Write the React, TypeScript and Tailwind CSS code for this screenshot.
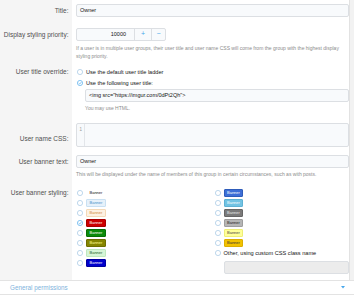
const Radio = ({ checked = false }: { checked?: boolean }) => (
  <svg width="6" height="6" viewBox="0 0 12 12" className="shrink-0">
    <circle cx="6" cy="6" r="5.2" fill="white" stroke={checked ? '#47a7eb' : '#9cc2e2'} strokeWidth="1.3" />
    {checked && <path d="M3.4 6.2 L5.3 8 L8.7 4.3" fill="none" stroke="#47a7eb" strokeWidth="1.4" />}
  </svg>
)

const leftBanners = [
  { cls: 'bg-transparent text-[#141414] border-transparent', checked: false },
  { cls: 'bg-[#e6f1fa] text-[#4a8fc7] border-[#c9e0f2]', checked: false },
  { cls: 'bg-[#fdf1e2] text-[#d28b3a] border-[#f3d9b8]', checked: false },
  { cls: 'bg-[#cc0000] text-white border-[#a80000]', checked: true },
  { cls: 'bg-[#0a8a0a] text-white border-[#067006]', checked: false },
  { cls: 'bg-[#858500] text-[#ffff99] border-[#6e6e00]', checked: false },
  { cls: 'bg-[#d6f5d6] text-[#1f5c1f] border-[#bfe8bf]', checked: false },
  { cls: 'bg-[#0000cc] text-white border-[#0000a0]', checked: false },
]

const rightBanners = [
  'bg-[#3d6fd6] text-white border-[#2e5cba]',
  'bg-[#72c3e3] text-white border-[#5fb2d4]',
  'bg-[#7a7a7a] text-[#e8e8e8] border-[#666]',
  'bg-[#b5b5b5] text-[#222] border-[#9e9e9e]',
  'bg-[#ffff99] text-[#444] border-[#eeee77]',
  'bg-[#f2c200] text-[#333] border-[#dcae00]',
]

const Banner = ({ cls }: { cls: string }) => (
  <span className={`inline-block border rounded-[1px] px-[2.5px] text-[4px] leading-[5.5px] ${cls}`}>Banner</span>
)

const Label = ({ text, pad }: { text: string; pad: string }) => (
  <div className={`w-[72px] shrink-0 bg-[#f5f5f5] text-right pr-[3.5px] text-[6.5px] text-[#505050] ${pad}`}>{text}</div>
)

const inputCls =
  'h-[13px] border border-[#dcdfe3] bg-[#f8fafc] rounded-[2px] px-[3px] flex items-center text-[5.5px] text-[#141414]'

export default function App() {
  return (
    <div className="w-[354px] h-[300px] overflow-hidden bg-white font-['Liberation_Sans',Arial,sans-serif] text-[5.6px] text-[#141414]">
      <div className="flex">
        <div className="flex-1">
          {/* Title */}
          <div className="flex">
            <Label text="Title:" pad="pt-[4px] leading-[13px]" />
            <div className="flex-1 pl-[4px] pt-[4px] pb-[11px]">
              <div className={inputCls}>Owner</div>
            </div>
          </div>

          {/* Display styling priority */}
          <div className="flex">
            <Label text="Display styling priority:" pad="leading-[13px]" />
            <div className="flex-1 pl-[4px] pb-[7px]">
              <div className="flex h-[13px] w-[90px] border border-[#dcdfe3] rounded-[2px] bg-[#f8fafc] text-[5.5px]">
                <div className="w-[57px] flex items-center justify-end pr-[8px]">10000</div>
                <div className="w-[17px] border-l border-[#dcdfe3] flex items-center justify-center text-[#47a7eb] text-[7px]">+</div>
                <div className="flex-1 border-l border-[#dcdfe3] flex items-center justify-center text-[#47a7eb] text-[7px]">−</div>
              </div>
              <p className="mt-[3px] text-[5px] leading-[8px] text-[#8c8c8c]">
                If a user is in multiple user groups, their user title and user name CSS will come from the group with the highest display styling priority.
              </p>
            </div>
          </div>

          {/* User title override */}
          <div className="flex">
            <Label text="User title override:" pad="leading-[10px]" />
            <div className="flex-1 pl-[4px] pb-[11px]">
              <div className="flex items-center gap-[3px] h-[10px] pl-[1px]">
                <Radio />
                <span>Use the default user title ladder</span>
              </div>
              <div className="flex items-center gap-[3px] h-[10px] pl-[1px] mt-[1px]">
                <Radio checked />
                <span>Use the following user title:</span>
              </div>
              <div className="pl-[9px] mt-[1px]">
                <div className={inputCls}>&lt;img src="https://imgur.com/0dPt2Qh"&gt;</div>
                <p className="mt-[2px] text-[5px] leading-[8px] text-[#8c8c8c]">You may use HTML.</p>
              </div>
            </div>
          </div>

          {/* User name CSS */}
          <div className="flex">
            <Label text="User name CSS:" pad="pt-[11px] leading-[10px]" />
            <div className="flex-1 pl-[4px] pb-[8px]">
              <div className="h-[24px] border border-[#dcdfe3] rounded-[2px] bg-[#f8fafc] flex">
                <div className="w-[8px] border-r border-[#e3e6ea] text-right pr-[2px] pt-[3px] text-[4.5px] text-[#9a9a9a]">1</div>
                <div className="flex-1" />
              </div>
            </div>
          </div>

          {/* User banner text */}
          <div className="flex">
            <Label text="User banner text:" pad="leading-[13px]" />
            <div className="flex-1 pl-[4px] pb-[10px]">
              <div className={inputCls}>Owner</div>
              <p className="mt-[2px] text-[5px] leading-[8px] text-[#8c8c8c]">
                This will be displayed under the name of members of this group in certain circumstances, such as with posts.
              </p>
            </div>
          </div>

          {/* User banner styling */}
          <div className="flex">
            <Label text="User banner styling:" pad="leading-[10px]" />
            <div className="flex-1 pl-[4px] pb-[6px] grid grid-cols-2">
              <div>
                {leftBanners.map((b, i) => (
                  <div key={i} className="flex items-center gap-[3px] h-[10px] pl-[1px]">
                    <Radio checked={b.checked} />
                    <Banner cls={b.cls} />
                  </div>
                ))}
              </div>
              <div>
                {rightBanners.map((c, i) => (
                  <div key={i} className="flex items-center gap-[3px] h-[10px] pl-[2px]">
                    <Radio />
                    <Banner cls={c} />
                  </div>
                ))}
                <div className="flex items-center gap-[3px] h-[10px] pl-[2px]">
                  <Radio />
                  <span>Other, using custom CSS class name</span>
                </div>
                <div className="pl-[11px] mt-[3px]">
                  <div className="h-[13px] border border-[#dcdfe3] rounded-[2px] bg-[#ececec]" />
                </div>
              </div>
            </div>
          </div>
        </div>
        <div className="w-[5px] bg-[#f2f2f2] border-l border-[#e2e2e2]" />
      </div>

      {/* General permissions */}
      <div className="h-[15px] border-t border-b border-[#e3e3e3] flex items-center justify-between pl-[10px] pr-[9px]">
        <span className="text-[6.3px] text-[#7fb3dc]">General permissions</span>
        <svg width="4" height="3" viewBox="0 0 8 6">
          <path d="M0 0 L8 0 L4 5 Z" fill="#47a7eb" />
        </svg>
      </div>
    </div>
  )
}
